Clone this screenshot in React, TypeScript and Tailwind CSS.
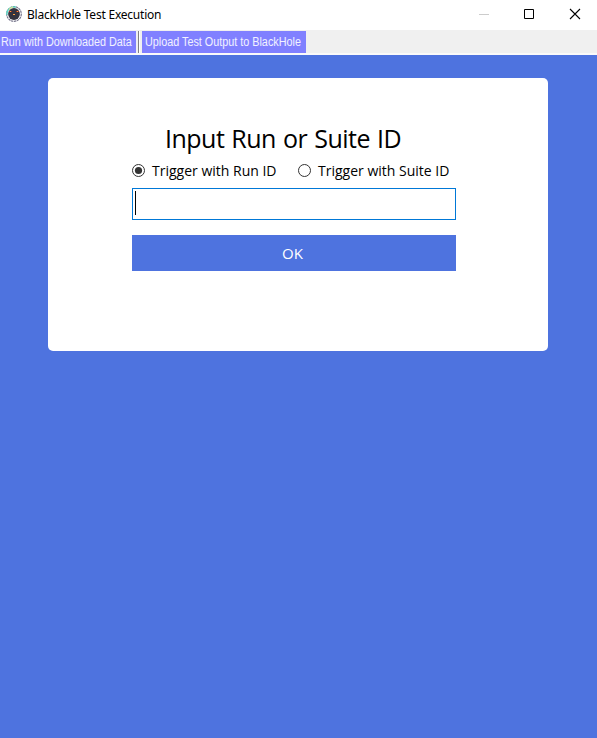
import { useState } from "react";

function AppIcon() {
  return (
    <svg className="ml-[6px] h-4 w-4 shrink-0" viewBox="0 0 16 16">
      <circle cx="8" cy="8" r="7.3" fill="#fff" stroke="#77758c" strokeWidth="1.2" strokeDasharray="2.4 .6" />
      <path d="M1 9A7 7 0 0 1 10 1.2" fill="none" stroke="#58d9c5" strokeWidth="1.3" />
      <path d="M3 3.500A7 7 0 0 1 7 1" fill="none" stroke="#e8e78a" strokeWidth="1.1" />
      <circle cx="8" cy="8" r="5.9" fill="#34333f" />
      <path d="M3 5.500h3M10 5.500h3" stroke="#a8321f" strokeWidth="1" />
      <path d="M4 5.500h1M11 5.500h1M7 8.500h2" stroke="#ffa040" strokeWidth="1" />
    </svg>
  );
}

function Radio({ checked, label, width, spacing, onSelect }: { checked: boolean; label: string; width: string; spacing: string; onSelect: () => void }) {
  return (
    <button role="radio" aria-checked={checked} onClick={onSelect} className={`flex h-[17px] shrink-0 items-center ${width}`}>
      <svg className="mr-[7px] h-[13px] w-[13px] shrink-0" viewBox="0 0 13 13">
        <circle cx="6.5" cy="6.5" r="6" fill="#fff" stroke="#333" />
        {checked && <circle cx="6.5" cy="6.5" r="3.6" fill="#333" />}
      </svg>
      <span className={`whitespace-nowrap text-[14px] leading-[17px] ${spacing}`}>{label}</span>
    </button>
  );
}

export default function App() {
  const [mode, setMode] = useState("run");
  return (
    <div className="flex h-[738px] w-[597px] flex-col overflow-hidden bg-[#4e73df] font-['Open_Sans',sans-serif] text-black">
      <header className="flex h-[30px] shrink-0 items-center bg-white pb-[2px]">
        <AppIcon />
        <h1 className="ml-[5px] whitespace-nowrap pt-[2px] font-['Noto_Sans',sans-serif] text-[12px] leading-4 tracking-[-0.22px]">BlackHole Test Execution</h1>
        <div className="ml-auto flex items-center">
          <svg className="h-[28px] w-[137px]" viewBox="0 0 137 28" fill="none">
            <path d="M19 14.5h10" stroke="#ccc" />
            <path d="M64.500 9.500h9v9h-9z" stroke="#000" />
            <path d="M110 9l10 10M120 9l-10 10" stroke="#000" strokeWidth="1.1" />
          </svg>
        </div>
      </header>
      <nav className="flex h-[25px] shrink-0 border-b-2 border-[#fafafa] bg-[#f0f0f0] pt-px font-['Liberation_Sans',sans-serif] text-[12px] text-white/90">
        <button className="h-[22px] w-[136px] whitespace-nowrap bg-[#8080ff] pl-px text-left leading-[22px]">
          <span className="inline-block origin-left scale-x-90">Run with Downloaded Data</span>
        </button>
        <span className="ml-[2px] h-[22px] w-[2px] border-l border-r border-l-[#808080] border-r-white" />
        <button className="ml-[2px] h-[22px] w-[164px] whitespace-nowrap bg-[#8080ff] pl-[3px] text-left leading-[22px]">
          <span className="inline-block origin-left scale-x-90">Upload Test Output to BlackHole</span>
        </button>
      </nav>
      <main className="ml-12 mt-[23px] flex h-[273px] w-[500px] flex-col rounded-[5px] bg-white pl-[84px] pt-[42px]">
        <h2 className="ml-[33px] h-[36px] whitespace-nowrap text-[25px] leading-[36px] tracking-[-0.5px] [word-spacing:1px]">Input Run or Suite ID</h2>
        <div role="radiogroup" className="mt-[6px] flex">
          <Radio checked={mode === "run"} label="Trigger with Run ID" width="w-[166px]" spacing="tracking-[0px]" onSelect={() => setMode("run")} />
          <Radio checked={mode === "suite"} label="Trigger with Suite ID" width="w-[160px]" spacing="tracking-[0px]" onSelect={() => setMode("suite")} />
        </div>
        <div className="mt-[9px] flex h-8 w-[324px] border border-[#0078d7] pl-[2px] pt-[2px]">
          <span className="h-6 w-px bg-black" />
        </div>
        <button className="mt-[15px] h-9 w-[324px] bg-[#4e73df] pr-[3px] text-[15px] leading-9 text-white">OK</button>
      </main>
    </div>
  );
}
